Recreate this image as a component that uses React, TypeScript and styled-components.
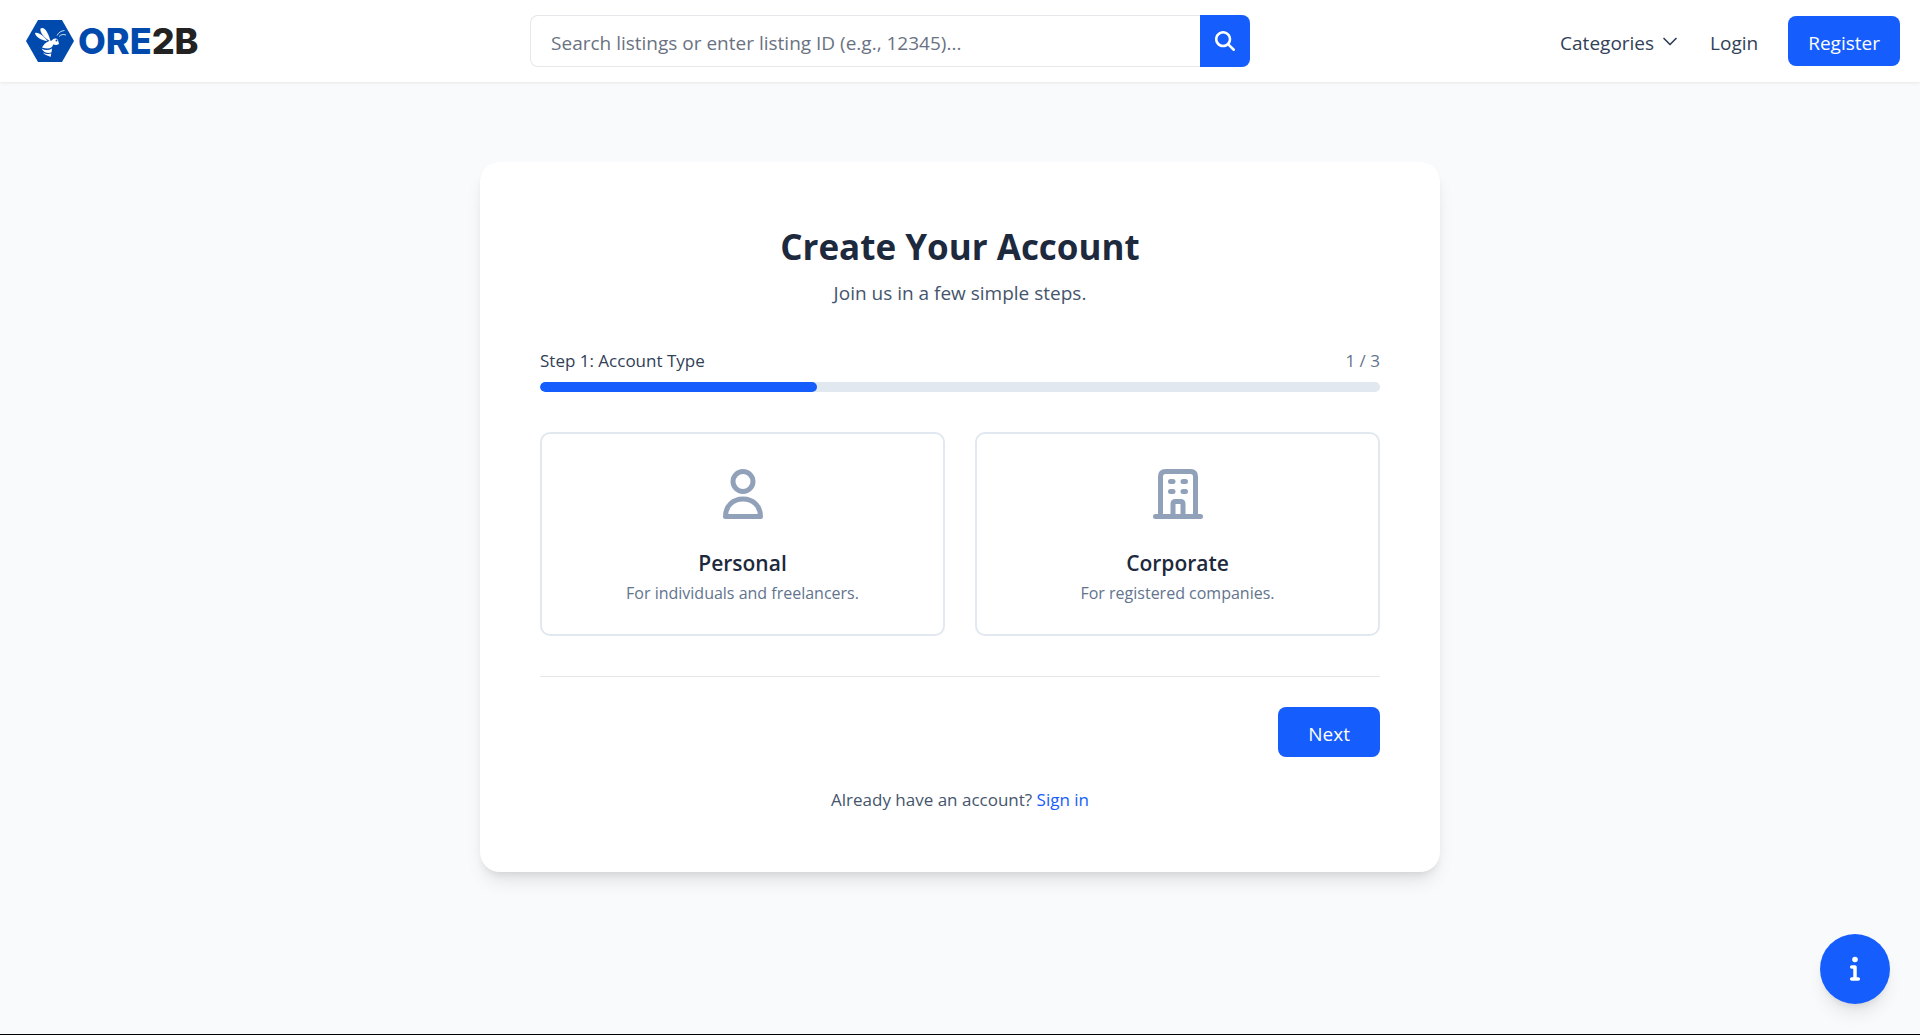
import React from 'react';
import styled, { createGlobalStyle } from 'styled-components';

const blue = '#155dfc';

const GlobalStyle = createGlobalStyle`
  *, *::before, *::after { box-sizing: border-box; }
  body {
    margin: 0;
    background: #f8fafc;
    color: #1e293b;
    font-family: "Open Sans", "Noto Sans", sans-serif;
    font-size: 19px;
    line-height: 30px;
  }
  button, input { font: inherit; }
  a { text-decoration: none; }
  h1, h2, p { margin: 0; }
`;

const Page = styled.div`
  min-height: 100vh;
  display: flex;
  flex-direction: column;
  border-bottom: 1px solid #000;
`;

const Header = styled.header`
  display: flex;
  align-items: center;
  justify-content: space-between;
  gap: 20px;
  height: 82px;
  padding: 0 20px;
  background: #fff;
  box-shadow: 0 1px 3px rgba(0, 0, 0, 0.08);
`;

const Brand = styled.a`
  display: flex;
  align-items: center;
  gap: 4px;
  width: 200px;
  padding-left: 6px;
`;

const Wordmark = styled.span`
  color: #004aad;
  font-family: Inter, "Liberation Sans", sans-serif;
  font-size: 36px;
  line-height: 44px;
  font-weight: 800;
`;

const WordmarkTail = styled.span`
  color: #222;
`;

const SearchForm = styled.form`
  display: flex;
  flex: 0 1 720px;
  height: 52px;
`;

const SearchInput = styled.input`
  flex: 1;
  min-width: 0;
  padding: 4px 20px 0;
  border: 1px solid #e5e7eb;
  border-right: 0;
  border-radius: 8px 0 0 8px;
  background: #fff;
  color: #1e293b;
  outline: none;
  &::placeholder { color: #6a7282; opacity: 1; }
`;

const SearchButton = styled.button`
  display: grid;
  place-items: center;
  width: 50px;
  padding: 0;
  border: 0;
  border-radius: 0 8px 8px 0;
  background: ${blue};
  color: #fff;
  cursor: pointer;
`;

const Nav = styled.nav`
  display: flex;
  align-items: center;
  justify-content: flex-end;
  gap: 30px;
`;

const MenuButton = styled.button`
  display: flex;
  align-items: center;
  gap: 6px;
  padding: 0;
  border: 0;
  background: none;
  color: #314158;
  cursor: pointer;
`;

const NavText = styled.span`
  padding-top: 4px;
`;

const NavLink = styled.a`
  padding-top: 4px;
  color: #314158;
`;

const RegisterLink = styled.a`
  padding: 12px 20px 8px;
  border-radius: 8px;
  background: ${blue};
  color: #fff;
`;

const Main = styled.main`
  flex: 1;
  display: flex;
  justify-content: center;
  align-items: flex-start;
  padding: 80px 20px;
`;

const Card = styled.section`
  width: 100%;
  max-width: 960px;
  padding: 60px;
  border-radius: 20px;
  background: #fff;
  box-shadow: 0 12px 18px -4px rgba(0, 0, 0, 0.1), 0 5px 8px -4px rgba(0, 0, 0, 0.1);
`;

const Heading = styled.div`
  display: flex;
  flex-direction: column;
  gap: 6px;
  margin-bottom: 40px;
  text-align: center;
`;

const Title = styled.h1`
  color: #1d293d;
  font-size: 35px;
  line-height: 50px;
  font-weight: 700;
`;

const Subtitle = styled.p`
  color: #45556c;
`;

const ProgressHead = styled.div`
  display: flex;
  justify-content: space-between;
  margin-bottom: 8px;
  font-size: 17px;
  line-height: 26px;
  color: #314158;
`;

const StepCount = styled.span`
  color: #62748e;
`;

const Track = styled.div`
  height: 10px;
  border-radius: 5px;
  background: #e2e8f0;
  overflow: hidden;
`;

const Fill = styled.div<{ $percent: number }>`
  width: ${(p) => p.$percent}%;
  height: 100%;
  border-radius: 5px;
  background: ${blue};
`;

const Options = styled.div`
  display: grid;
  grid-template-columns: 1fr 1fr;
  gap: 30px;
  margin: 40px 0;
`;

const Option = styled.button`
  display: flex;
  flex-direction: column;
  align-items: center;
  padding: 30px 30px 28px;
  border: 2px solid #e2e8f0;
  border-radius: 10px;
  background: #fff;
  cursor: pointer;
  svg { margin-bottom: 22px; color: #90a1b9; }
`;

const OptionTitle = styled.span`
  color: #1d293d;
  font-size: 21px;
  line-height: 34px;
  font-weight: 600;
`;

const OptionText = styled.span`
  color: #62748e;
  font-size: 16px;
  line-height: 26px;
`;

const Actions = styled.div`
  display: flex;
  justify-content: flex-end;
  padding-top: 30px;
  border-top: 1px solid #e5e7eb;
`;

const NextButton = styled.button`
  padding: 12px 30px 8px;
  border: 0;
  border-radius: 8px;
  background: ${blue};
  color: #fff;
  cursor: pointer;
`;

const SignIn = styled.p`
  margin-top: 30px;
  color: #45556c;
  font-size: 17px;
  line-height: 25px;
  text-align: center;
  a { color: ${blue}; }
`;

const HelpButton = styled.button`
  position: fixed;
  right: 30px;
  bottom: 31px;
  display: grid;
  place-items: center;
  width: 70px;
  height: 70px;
  padding: 0;
  border: 0;
  border-radius: 50%;
  background: ${blue};
  color: #fff;
  box-shadow: 0 12px 18px -4px rgba(0, 0, 0, 0.1), 0 5px 8px -4px rgba(0, 0, 0, 0.1);
  cursor: pointer;
`;

const BeeMark = () => (
  <svg width="48" height="44" viewBox="0 0 48 44" aria-hidden="true">
    <path d="M12 1H36L48 22L36 43H12L0 22Z" fill="#004aad" />
    <g fill="#fff">
      <path d="M24.500 22.500C18 19 13.500 13 14.500 9.500C18.500 6.500 23 15 24.500 22.500Z" />
      <path d="M21.500 22C15 21.500 9.500 17.500 9 14.200C12 12.500 18 17.500 21.500 22Z" />
      <path d="M17 27C19 23.500 22 22 26 21.500C27 19.500 30 18.500 32 21L33 25C31 26.500 28.500 26 27 25.500C27 29 22.500 30.500 16 28.500Z" />
      <path d="M15.500 29.500C19 31.500 22.500 31.500 26 29.500L25.500 33.500C21.500 34.500 18 34 15.500 29.500Z" />
      <path d="M17 33.500C20 35.300 22.500 35.300 25.300 34.500L24.500 38C23 36.500 19.500 37 17 33.500Z" />
    </g>
    <circle cx="30.500" cy="21.500" r="1" fill="#004aad" />
    <path d="M31 16.500C33 13 35 12 38.500 11.500M33 17.500C35 15.500 37 15 40 16" fill="none" stroke="#fff" strokeWidth="0.800" />
  </svg>
);

const SearchIcon = () => (
  <svg width="20" height="20" viewBox="0 0 512 512" fill="currentColor" aria-hidden="true">
    <path d="M416 208c0 45.900-14.900 88.300-40 122.700L502.600 457.400c12.500 12.500 12.500 32.800 0 45.300s-32.800 12.500-45.300 0L330.700 376c-34.400 25.200-76.800 40-122.700 40C93.100 416 0 322.900 0 208S93.100 0 208 0S416 93.100 416 208zM208 352a144 144 0 1 0 0-288 144 144 0 1 0 0 288z" />
  </svg>
);

const ChevronIcon = () => (
  <svg width="20" height="20" viewBox="0 0 20 20" fill="none" stroke="currentColor" strokeWidth="1.700" strokeLinecap="round" strokeLinejoin="round" aria-hidden="true">
    <path d="M4 7.500L10 13.500L16 7.500" />
  </svg>
);

const PersonIcon = () => (
  <svg width="60" height="60" viewBox="0 0 60 60" fill="none" stroke="currentColor" strokeWidth="5" strokeLinejoin="round" aria-hidden="true">
    <circle cx="30" cy="17.500" r="10" />
    <path d="M12.500 52.500C12.500 42 20 35 30 35S47.500 42 47.500 52.500Z" />
  </svg>
);

const BuildingIcon = () => (
  <svg width="60" height="60" viewBox="0 0 60 60" fill="none" stroke="currentColor" strokeWidth="5" strokeLinecap="round" aria-hidden="true">
    <path d="M7.500 52.500H52.500M12.500 52.500V12.500Q12.500 7.500 17.500 7.500H42.500Q47.500 7.500 47.500 12.500V52.500" />
    <path d="M22.500 17.500H25M35 17.500H37.500M22.500 27.500H25M35 27.500H37.500" />
    <path d="M25 52.500V40Q25 37.500 27.500 37.500H32.500Q35 37.500 35 40V52.500" />
  </svg>
);

const InfoIcon = () => (
  <svg width="12" height="26" viewBox="0 0 12 26" fill="none" stroke="currentColor" strokeWidth="3.500" strokeLinecap="round" strokeLinejoin="round" aria-hidden="true">
    <circle cx="6" cy="3.500" r="2.800" fill="currentColor" stroke="none" />
    <path d="M2.700 11H6V23M2.700 23H9.300" />
  </svg>
);

const accountTypes = [
  { title: 'Personal', text: 'For individuals and freelancers.', Icon: PersonIcon },
  { title: 'Corporate', text: 'For registered companies.', Icon: BuildingIcon },
];

export default function App() {
  return (
    <Page>
      <GlobalStyle />
      <Header>
        <Brand href="#">
          <BeeMark />
          <Wordmark>ORE<WordmarkTail>2B</WordmarkTail></Wordmark>
        </Brand>
        <SearchForm role="search" onSubmit={(e) => e.preventDefault()}>
          <SearchInput type="text" aria-label="Search listings" placeholder="Search listings or enter listing ID (e.g., 12345)..." />
          <SearchButton type="submit" aria-label="Search"><SearchIcon /></SearchButton>
        </SearchForm>
        <Nav>
          <MenuButton type="button"><NavText>Categories</NavText><ChevronIcon /></MenuButton>
          <NavLink href="#">Login</NavLink>
          <RegisterLink href="#">Register</RegisterLink>
        </Nav>
      </Header>
      <Main>
        <Card>
          <Heading>
            <Title>Create Your Account</Title>
            <Subtitle>Join us in a few simple steps.</Subtitle>
          </Heading>
          <ProgressHead>
            <span>Step 1: Account Type</span>
            <StepCount>1 / 3</StepCount>
          </ProgressHead>
          <Track><Fill $percent={33} /></Track>
          <Options>
            {accountTypes.map(({ title, text, Icon }) => (
              <Option type="button" key={title}>
                <Icon />
                <OptionTitle>{title}</OptionTitle>
                <OptionText>{text}</OptionText>
              </Option>
            ))}
          </Options>
          <Actions><NextButton type="button">Next</NextButton></Actions>
          <SignIn>Already have an account? <a href="#">Sign in</a></SignIn>
        </Card>
      </Main>
      <HelpButton type="button" aria-label="Information"><InfoIcon /></HelpButton>
    </Page>
  );
}
